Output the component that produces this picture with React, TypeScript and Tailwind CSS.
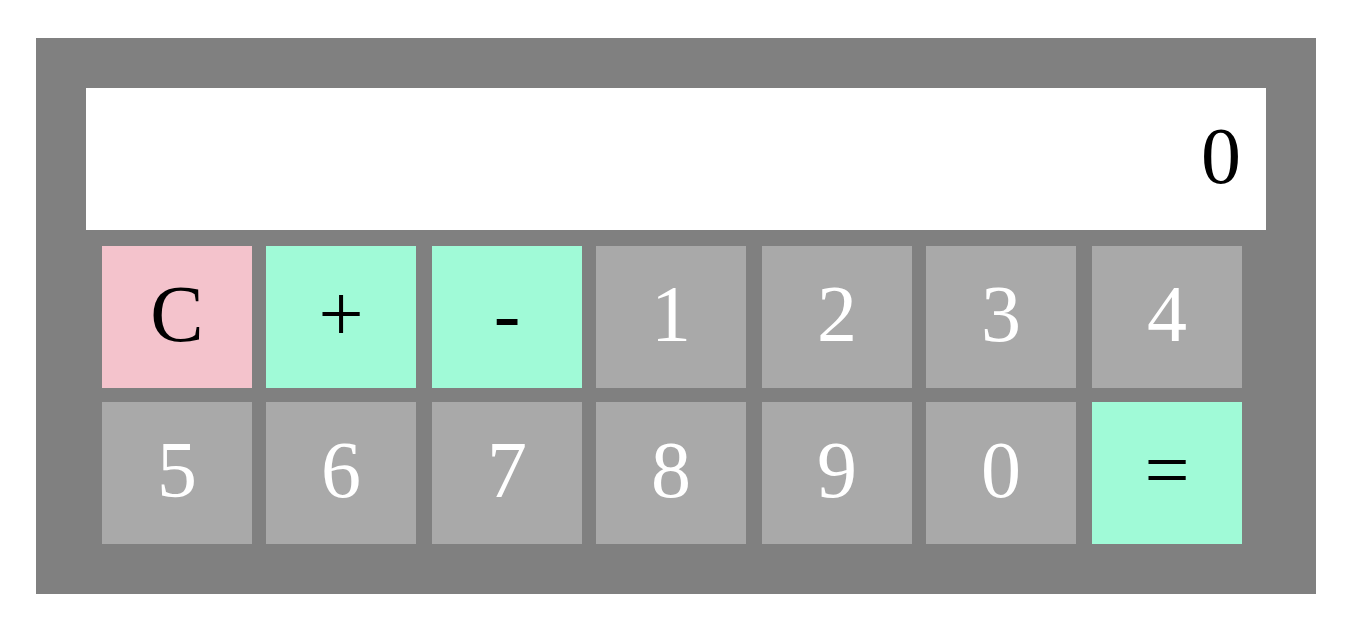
import React from "react";

type Btn = { label: string; kind: "clear" | "op" | "num" };

const row1: Btn[] = [
  { label: "C", kind: "clear" },
  { label: "+", kind: "op" },
  { label: "-", kind: "op" },
  { label: "1", kind: "num" },
  { label: "2", kind: "num" },
  { label: "3", kind: "num" },
  { label: "4", kind: "num" },
];
const row2: Btn[] = [
  { label: "5", kind: "num" },
  { label: "6", kind: "num" },
  { label: "7", kind: "num" },
  { label: "8", kind: "num" },
  { label: "9", kind: "num" },
  { label: "0", kind: "num" },
  { label: "=", kind: "op" },
];

function Key({ b, first, idx }: { b: Btn; first: boolean; idx: number }) {
  const color =
    b.kind === "clear"
      ? "bg-[#f4c3cc] text-black"
      : b.kind === "op"
      ? "bg-[#a0fad7] text-black"
      : "bg-[#a9a9a9] text-white";
  const margin = first ? "" : idx % 2 === 1 ? "ml-[14px]" : "ml-[16px]";
  return (
    <div
      className={`${color} ${margin} w-[150px] h-[142px] flex items-center justify-center pb-[6px] text-[80px] leading-none shrink-0`}
    >
      {b.label}
    </div>
  );
}

function Row({ items }: { items: Btn[] }) {
  return (
    <div className="flex">
      {items.map((b, i) => (
        <Key key={i} b={b} first={i === 0} idx={i} />
      ))}
    </div>
  );
}

export default function App() {
  return (
    <div
      className="bg-white w-[1348px] h-[634px] pt-[38px] pl-[36px]"
      style={{ fontFamily: '"Liberation Serif", "Times New Roman", serif' }}
    >
      <div className="w-[1280px] h-[556px] bg-[#808080] p-[50px]">
        <div className="w-[1180px] h-[142px] bg-white flex items-center justify-end pr-[25px] pb-[6px] text-[80px] leading-none text-black">
          0
        </div>
        <div className="pl-[16px] pt-[16px] flex flex-col gap-[14px]">
          <Row items={row1} />
          <Row items={row2} />
        </div>
      </div>
    </div>
  );
}
